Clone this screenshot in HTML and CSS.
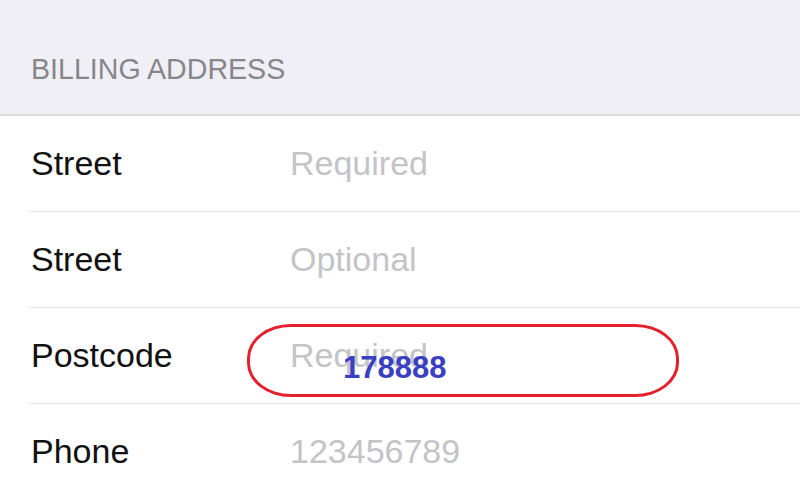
FILE: index.html
```html
<!DOCTYPE html>
<html lang="en">
<head>
<meta charset="UTF-8" />
<title>Billing Address</title>
<link rel="stylesheet" href="styles.css">
</head>
<body>

<div class="section-header">BILLING ADDRESS</div>

<div class="form-list">
  <div class="row">
    <span class="label">Street</span>
    <span class="value">Required</span>
  </div>
  <div class="row">
    <span class="label">Street</span>
    <span class="value">Optional</span>
  </div>
  <div class="row">
    <span class="label">Postcode</span>
    <span class="value">Required</span>
    <!-- annotation drawn over the field -->
    <div class="note">
      <span class="note-text">178888</span>
    </div>
  </div>
  <div class="row">
    <span class="label">Phone</span>
    <span class="value">123456789</span>
  </div>
</div>

</body>
</html>
```

FILE: styles.css
```css
body {
  margin: 0;
  font-family: "Liberation Sans", Arial, sans-serif;
  background: #fff;
  overflow: hidden;
}

.section-header {
  height: 116px;
  box-sizing: border-box;
  padding: 57px 0 0 31px;
  background: #f0eff5;
  border-bottom: 2px solid #dcdce0;
  color: #86868b;
  font-size: 28.6px;
  line-height: 24px;
}

.form-list {
  padding-left: 29px;
}

.row {
  position: relative;
  display: flex;
  align-items: center;
  height: 95px;
  border-bottom: 1px solid #e2e2e4;
}
.row:last-child {
  border-bottom: none;
}

.label {
  width: 259px;
  padding-left: 2px;
  font-size: 34px;
  color: #111;
}

.value {
  font-size: 34px;
  color: #c4c4c8;
}

.note {
  position: absolute;
  left: 218px;
  top: 16px;
  width: 426px;
  height: 67px;
  border: 3px solid #e3202c;
  border-radius: 44px / 34px;
}

.note-text {
  position: absolute;
  left: 93px;
  top: 23px;
  font-size: 31px;
  font-weight: bold;
  color: #3b3fc2;
}
```
